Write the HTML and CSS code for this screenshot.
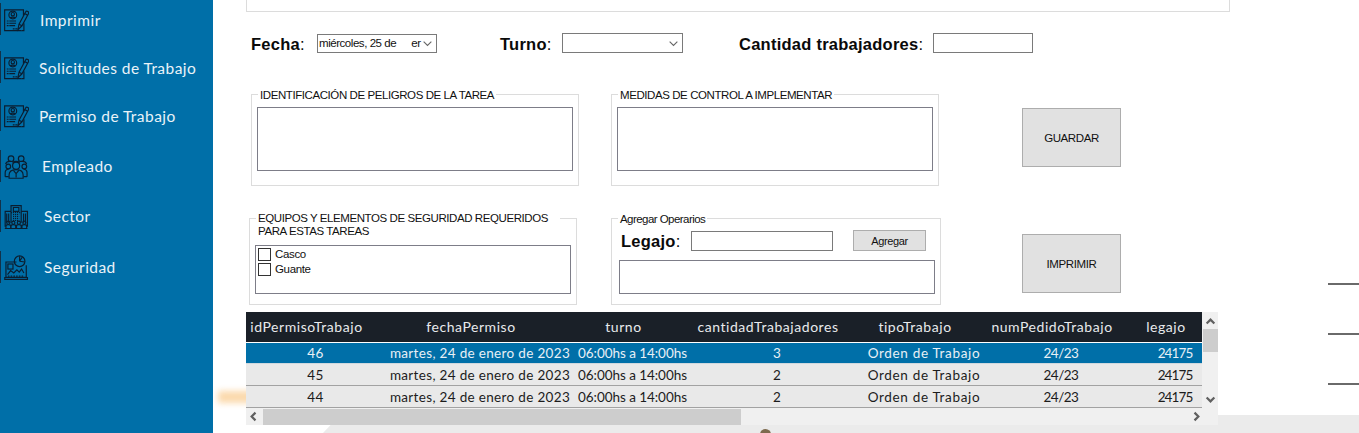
FILE: index.html
```html
<!DOCTYPE html>
<html lang="es">
<head>
<meta charset="utf-8">
<title>Permiso de Trabajo</title>
<link rel="stylesheet" href="styles.css">
</head>
<body>
<svg class="defs" width="0" height="0" aria-hidden="true">
  <symbol id="i-doc" viewBox="0.5 5.5 27 25">
    <path d="M21.500 13V6.500H1.200V29H19.500" fill="none"/>
    <path d="M19.500 29h2.500v-8" fill="none"/>
    <circle cx="10" cy="12" r="4.200" fill="none"/>
    <circle cx="10" cy="11.200" r="1.800" fill="none"/>
    <path d="M7 15.500c1-1.500 5-1.500 6 0" fill="none"/>
    <path d="M3.500 18.500h10M3.500 21h10M3.500 23.500h9M10 27h5" fill="none" stroke-dasharray="2 .7 20"/>
    <path d="M15.500 28l1.200-6 7-13a1.800 1.800 0 0 1 3.200 1.700l-7 13z" fill="none"/>
    <path d="M22.700 10.500l3.200 1.700M16.700 22l3.200 1.700" fill="none"/>
  </symbol>
  <symbol id="i-people" viewBox="0 0 32 32">
    <g fill="none">
      <circle cx="9" cy="6" r="3.600"/><circle cx="22" cy="6" r="3.600"/>
      <circle cx="5.500" cy="16" r="3"/><circle cx="26" cy="16" r="3"/>
      <circle cx="15.500" cy="15" r="4.500"/>
      <path d="M2 13c1-3 4-4 7-3.500M29 13c-1-3-4-4-7-3.500M11 11c1.500-2 7-2 9 0"/>
      <path d="M1.500 29v-5c0-3 2-4.500 4.500-4.500M29.500 29v-5c0-3-2-4.500-4.500-4.500"/>
      <path d="M6.500 31v-4c0-5 4-7 9-7s9 2 9 7v4z"/>
      <path d="M12 21l3.500 4 3.500-4M15.500 25v5"/>
      <path d="M1.500 29H6M25 29h4.500"/>
    </g>
  </symbol>
  <symbol id="i-building" viewBox="0 0 32 32">
    <g fill="none">
      <path d="M9 24V2h13v22"/><path d="M12 4.500h7v5h-7z"/>
      <path d="M9 11H22M11.500 13.500h8M11.500 16h8M11.500 18.500h8M11.500 21h8" stroke-dasharray="1.500 1"/>
      <path d="M9 9.500H1.500V29M22 9.500h8V29"/>
      <path d="M3.500 12v12M6 12v12M25 12v12M27.500 12v12"/>
      <circle cx="5.500" cy="24" r="2"/><circle cx="12" cy="24" r="2"/><circle cx="19" cy="24" r="2"/><circle cx="26" cy="24" r="2"/>
      <path d="M2.500 31v-3c0-1 1-1.500 3-1.500s3 .5 3 1.500v3M9 31v-3c0-1 1-1.500 3-1.500s3 .5 3 1.500v3M16 31v-3c0-1 1-1.500 3-1.500s3 .5 3 1.500v3M23 31v-3c0-1 1-1.500 3-1.500s3 .5 3 1.500v3"/>
      <path d="M1 31.500h29"/>
    </g>
  </symbol>
  <symbol id="i-chart" viewBox="0 0 32 32">
    <g fill="none">
      <path d="M16 9H2.500v19.500h26V13"/>
      <path d="M1 29v2.500h29V29z"/>
      <circle cx="20" cy="8" r="6.800"/>
      <path d="M20 8l3.500-5.500M20 8l6.500 1M20 8V1.500"/>
      <rect x="5" y="11.500" width="6.500" height="6.500"/>
      <path d="M4.500 25l4-5 4 3 4-4 3 3 3-4 3 5"/>
      <path d="M5 27h21" stroke-dasharray="2 1.500"/>
    </g>
  </symbol>
  <symbol id="chev" viewBox="0 0 10 10">
    <path d="M1.500 6.800L5 3.300l3.500 3.500" fill="none"/>
  </symbol>
</svg>

<div class="page">
  <div class="deco-band"></div>
  <div class="deco-glow"></div>
  <div class="deco-dot"></div>
  <div class="deco-dashes"><span></span><span></span><span></span></div>

  <nav class="sidebar">
    <a class="nav-item nav-a"><svg class="nav-icon icon-doc"><use href="#i-doc"/></svg><span class="nav-text t-40">Imprimir</span></a>
    <a class="nav-item nav-b"><svg class="nav-icon icon-doc"><use href="#i-doc"/></svg><span class="nav-text t-39">Solicitudes de Trabajo</span></a>
    <a class="nav-item nav-b"><svg class="nav-icon icon-doc"><use href="#i-doc"/></svg><span class="nav-text t-39">Permiso de Trabajo</span></a>
    <a class="nav-item nav-c"><svg class="nav-icon"><use href="#i-people"/></svg><span class="nav-text t-42">Empleado</span></a>
    <a class="nav-item nav-c"><svg class="nav-icon"><use href="#i-building"/></svg><span class="nav-text t-44">Sector</span></a>
    <a class="nav-item nav-d"><svg class="nav-icon"><use href="#i-chart"/></svg><span class="nav-text t-44">Seguridad</span></a>
  </nav>

  <main class="main">
    <div class="top-box"></div>

    <div class="form-row">
      <label class="big-label w-fecha"><b>Fecha</b>:</label>
      <div class="combo w-120"><span class="combo-text">miércoles, 25 de</span><span class="combo-tail">er</span><svg class="combo-chev"><use href="#chev"/></svg></div>
      <label class="big-label w-turno"><b>Turno</b>:</label>
      <div class="combo w-121"><span class="combo-text"></span><svg class="combo-chev"><use href="#chev"/></svg></div>
      <label class="big-label w-cantidad"><b>Cantidad trabajadores</b>:</label>
      <div class="field w-100"></div>
    </div>

    <section class="group-row row-one">
      <div class="group g-328">
        <span class="legend">IDENTIFICACIÓN DE PELIGROS DE LA TAREA</span>
        <div class="area"></div>
      </div>
      <div class="group g-328 g-second">
        <span class="legend">MEDIDAS DE CONTROL A IMPLEMENTAR</span>
        <div class="area"></div>
      </div>
      <button class="btn-big btn-guardar">GUARDAR</button>
    </section>

    <section class="group-row row-two">
      <div class="group g-328 g-equipos">
        <span class="legend legend-wide">EQUIPOS Y ELEMENTOS DE SEGURIDAD REQUERIDOS PARA ESTAS TAREAS</span>
        <div class="check-list">
          <label class="check"><span class="box"></span>Casco</label>
          <label class="check"><span class="box"></span>Guante</label>
        </div>
      </div>
      <div class="group g-330 g-operarios">
        <span class="legend legend-op">Agregar Operarios</span>
        <div class="legajo-row">
          <label class="big-label w-legajo"><b>Legajo</b>:</label>
          <div class="field w-142"></div>
          <button class="btn-small">Agregar</button>
        </div>
        <div class="op-list"></div>
      </div>
      <button class="btn-big btn-imprimir">IMPRIMIR</button>
    </section>

    <div class="grid-wrap">
      <div class="grid-view">
        <table class="data">
          <colgroup>
            <col class="c1"><col class="c2"><col class="c3"><col class="c4"><col class="c5"><col class="c6"><col class="c7">
          </colgroup>
          <thead>
            <tr><th>idPermisoTrabajo</th><th>fechaPermiso</th><th>turno</th><th>cantidadTrabajadores</th><th>tipoTrabajo</th><th>numPedidoTrabajo</th><th>legajo</th></tr>
          </thead>
          <tbody>
            <tr class="selected r1"><td>46</td><td>martes, 24 de enero de 2023</td><td class="td-turno">06:00hs a 14:00hs</td><td>3</td><td class="td-tipo">Orden de Trabajo</td><td class="td-num">24/23</td><td class="td-legajo">24175</td></tr>
            <tr><td>45</td><td>martes, 24 de enero de 2023</td><td class="td-turno">06:00hs a 14:00hs</td><td>2</td><td class="td-tipo">Orden de Trabajo</td><td class="td-num">24/23</td><td class="td-legajo">24175</td></tr>
            <tr><td>44</td><td>martes, 24 de enero de 2023</td><td class="td-turno">06:00hs a 14:00hs</td><td>2</td><td class="td-tipo">Orden de Trabajo</td><td class="td-num">24/23</td><td class="td-legajo">24175</td></tr>
          </tbody>
        </table>
      </div>
      <div class="vscroll">
        <svg class="arrow"><use href="#chev"/></svg>
        <div class="vthumb"></div>
        <svg class="arrow arrow-down"><use href="#chev"/></svg>
      </div>
      <div class="hscroll">
        <svg class="arrow arrow-left"><use href="#chev"/></svg>
        <div class="hthumb"></div>
        <svg class="arrow arrow-right"><use href="#chev"/></svg>
      </div>
      <div class="corner"></div>
    </div>
  </main>
</div>
</body>
</html>
```

FILE: styles.css
```css
* { box-sizing: border-box; }
html, body { margin: 0; padding: 0; background: #fff; }
body { overflow: hidden; font-family: "Liberation Sans", Arial, sans-serif; color: #111; }
.defs { position: absolute; }

.page { position: relative; display: flex; width: 1359px; height: 433px; overflow: hidden; background: #fff; }

/* background decoration */
.deco-band { position: absolute; left: 320px; right: 0; top: 415px; bottom: 0; background: #ebebeb; clip-path: polygon(20px 0, 100% 0, 100% 100%, 3px 100%); }
.deco-glow { position: absolute; left: 218px; top: 391px; width: 40px; height: 12px; background: #fbd9ac; filter: blur(3px); }
.deco-dot { position: absolute; left: 760px; top: 429px; width: 11px; height: 11px; border-radius: 50%; background: #7d6a4e; }
.deco-dashes { position: absolute; left: 1328px; right: 0; top: 283px; display: flex; flex-direction: column; gap: 48px; }
.deco-dashes span { display: block; height: 2px; background: #6a6a6a; }

/* sidebar */
.sidebar { flex: 0 0 213px; height: 433px; padding-top: 3px; background: #006fa8; display: flex; flex-direction: column; position: relative; }
.nav-item { display: flex; align-items: center; height: 32px; border-left: 1px solid #12324a; }
.nav-b { margin-top: 16px; }
.nav-c { margin-top: 18px; }
.nav-d { margin-top: 19px; }
.nav-item:nth-child(4) { margin-top: 19px; }
.nav-icon { flex: none; width: 25px; height: 25px; margin-left: 3px; stroke: #0a1e30; stroke-width: 1.500; fill: none; }
.icon-doc { margin-top: 3px; stroke-width: 1.250; }
.nav-text { font-family: Lato, "Open Sans", sans-serif; font-size: 15.500px; color: #eaf3f8; line-height: 20px; padding-top: 1px; white-space: nowrap; letter-spacing: .45px; }
.t-39 { margin-left: 10px; }
.t-40 { margin-left: 11px; }
.t-42 { margin-left: 13px; padding-top: 0; margin-top: -1px; }
.t-44 { margin-left: 15px; padding-top: 0; margin-top: -1px; }

/* main */
.main { position: relative; flex: 1; display: flex; flex-direction: column; min-width: 0; }
.top-box { width: 984px; height: 12px; margin-left: 33px; border: 1px solid #dcdcdc; border-top: 0; }

.form-row { display: flex; align-items: center; height: 20px; margin: 21px 0 0 38px; }
.big-label { font-size: 16.500px; line-height: 20px; padding-top: 1px; white-space: nowrap; color: #0a0a0a; flex: none; letter-spacing: .25px; }
.w-fecha { width: 66px; }
.w-turno { width: 62px; margin-left: 63px; padding-top: 2px; }
.w-cantidad { width: 194px; margin-left: 56px; padding-top: 2px; }
.w-legajo { width: 70px; padding-top: 1px; }

.combo { flex: none; display: flex; align-items: center; height: 20px; border: 1px solid #7a7a7a; background: #fff; font-size: 11.500px; letter-spacing: -.45px; padding-left: 1px; }
.w-120 { width: 120px; height: 19px; }
.w-121 { width: 121px; }
.combo-text { flex: none; }
.combo-tail { margin-left: 15px; }
.combo-chev { flex: none; width: 11px; height: 11px; margin-left: auto; margin-right: 3px; stroke: #666; stroke-width: 1; transform: rotate(180deg); }
.field { flex: none; height: 20px; border: 1px solid #7a7a7a; background: #fff; }
.w-100 { width: 100px; }
.w-142 { width: 142px; margin-top: 1px; }

.group-row { display: flex; align-items: flex-start; }
.row-one { margin: 41px 0 0 38px; }
.row-two { margin: 32px 0 0 36px; }

.group { position: relative; flex: none; border: 1px solid #dcdcdc; }
.g-328 { width: 328px; }
.g-330 { width: 330px; }
.row-one .group { height: 92px; padding: 12px 0 0 5px; }
.row-two .group { height: 87px; }
.g-second { margin-left: 32px; }
.g-operarios { margin-left: 34px; }
.legend { position: absolute; left: 6px; top: -7px; padding: 0 2px; background: #fff; font-size: 11.500px; line-height: 14px; letter-spacing: -.42px; color: #111; white-space: nowrap; }
.legend-wide { width: 304px; white-space: normal; line-height: 13px; padding-right: 6px; }
.legend-op { letter-spacing: -.55px; }
.area { width: 316px; height: 64px; border: 1px solid #7d7d88; background: #fff; }

.btn-big { flex: none; width: 99px; height: 59px; border: 1px solid #adadad; background: #e1e1e1; font: 11.500px "Liberation Sans", Arial, sans-serif; letter-spacing: -.4px; color: #111; padding: 0; }
.btn-guardar { margin: 14px 0 0 83px; }
.btn-imprimir { margin: 16px 0 0 81px; }

.g-equipos { padding: 26px 0 0 5px; }
.check-list { width: 316px; height: 49px; border: 1px solid #7d7d88; padding-top: 1px; }
.check { display: flex; align-items: center; height: 15px; padding-bottom: 2px; font-size: 11.500px; letter-spacing: -.35px; padding-left: 2px; }
.box { flex: none; width: 13px; height: 13px; margin-top: 1px; border: 1px solid #333; background: #fff; margin-right: 4px; }

.g-operarios { padding: 11px 0 0 7px; }
.legajo-row { display: flex; align-items: flex-start; padding-left: 2px; height: 21px; }
.btn-small { flex: none; width: 73px; height: 21px; margin-left: 20px; border: 1px solid #adadad; background: #e1e1e1; font: 11px "Liberation Sans", Arial, sans-serif; letter-spacing: -.35px; color: #111; padding: 0; }
.op-list { width: 316px; height: 34px; margin-top: 9px; border: 1px solid #7d7d88; }

/* data grid */
.grid-wrap { display: grid; grid-template-columns: 956px 16px; grid-template-rows: 96px 17px; width: 972px; margin: 7px 0 0 33px; background: #f0f0f0; }
.grid-view { overflow: hidden; background: #f0f0f0; }
.data { width: 966px; table-layout: fixed; border-collapse: collapse; font-family: Lato, "Open Sans", sans-serif; font-size: 13.500px; }
.c1 { width: 139px; } .c2 { width: 190px; } .c3 { width: 115px; } .c4 { width: 174px; } .c5 { width: 120px; } .c6 { width: 154px; } .c7 { width: 74px; }
.data th { height: 30px; padding: 0 18px 0 0; background: #1a2028; color: #e8eaec; font-size: 14px; font-weight: 400; text-align: center; white-space: nowrap; border-bottom: 1px solid #fff; letter-spacing: .55px; }
.data td { height: 22px; padding: 1px 0 0; text-align: center; white-space: nowrap; background: #e9e9e9; color: #1c1c1c; border-bottom: 1px solid #a2a2a2; letter-spacing: .33px; }
.data .selected td { background: #006fa8; color: #e8f0f6; border-bottom-color: #cfd8de; padding-top: 0; }
.data .td-turno { letter-spacing: -.05px; }
.data .td-tipo { letter-spacing: .67px; }
.data .td-num { letter-spacing: -.5px; }
.data .td-legajo { letter-spacing: -.9px; }
.r1 td { height: 21px; }

.vscroll { position: relative; display: flex; flex-direction: column; align-items: center; background: #f0f0f0; }
.hscroll { display: flex; align-items: center; background: #f0f0f0; }
.arrow { flex: none; width: 11px; height: 11px; stroke: #606060; stroke-width: 2; }
.vscroll .arrow { margin-top: 4px; }
.vscroll .arrow-down { margin-top: auto; margin-bottom: 3px; transform: rotate(180deg); }
.vthumb { width: 15px; height: 23px; margin-top: 2px; background: #cdcdcd; }
.hscroll .arrow-left { margin-left: 2px; transform: rotate(-90deg); }
.hthumb { width: 478px; height: 16px; margin-left: 4px; background: #cdcdcd; }
.hscroll .arrow-right { margin-left: auto; margin-right: 0; transform: rotate(90deg); }
.corner { background: #f0f0f0; }
```
